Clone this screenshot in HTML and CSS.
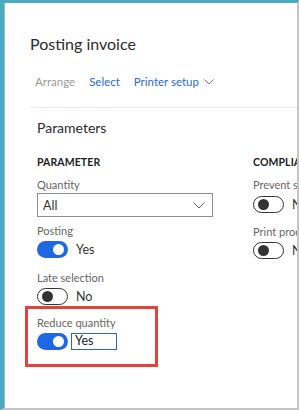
FILE: index.html
```html
<!DOCTYPE html>
<html>
<head>
<meta charset="utf-8">
<link rel="stylesheet" href="styles.css">
</head>
<body>
<div class="frame">
  <h1 class="title">Posting invoice</h1>
  <div class="actions">
    <span class="act disabled">Arrange</span>
    <span class="act link">Select</span>
    <span class="act link">Printer setup
      <svg class="chev" width="10" height="6" viewBox="0 0 10 6"><path d="M0.5 0.5 L5 5 L9.5 0.5" fill="none" stroke="#777" stroke-width="1"/></svg>
    </span>
  </div>
  <div class="panel">
    <h2 class="section">Parameters</h2>
    <div class="cols">
      <div class="col left">
        <div class="group">PARAMETER</div>
        <div class="label">Quantity</div>
        <div class="select">
          <span>All</span>
          <svg width="12" height="7" viewBox="0 0 12 7"><path d="M0.5 0.5 L6 6 L11.5 0.5" fill="none" stroke="#666" stroke-width="1"/></svg>
        </div>
        <div class="label l-posting">Posting</div>
        <div class="row"><span class="toggle on"></span><span class="val">Yes</span></div>
        <div class="label l-late">Late selection</div>
        <div class="row"><span class="toggle off"></span><span class="val">No</span></div>
        <div class="highlight">
          <div class="label">Reduce quantity</div>
          <div class="row"><span class="toggle on"></span><span class="input">Yes</span></div>
        </div>
      </div>
      <div class="col right">
        <div class="group">COMPLIANCE</div>
        <div class="label">Prevent sales</div>
        <div class="row r1"><span class="toggle off"></span><span class="val">No</span></div>
        <div class="label l-print">Print product</div>
        <div class="row"><span class="toggle off"></span><span class="val">No</span></div>
      </div>
    </div>
  </div>
</div>
</body>
</html>
```
FILE: styles.css
```css
* { box-sizing: border-box; }
html, body { margin: 0; padding: 0; background: #fff; }
body { font-family: "Segoe UI", "Lato", "Noto Sans", sans-serif; color: #333; }
.frame {
  width: 299px; height: 410px; overflow: hidden;
  border-top: 3px solid #4ba9c2;
  border-left: 4px solid #4ba9c2;
  border-right: 2px solid #c4c4c4;
  border-bottom: 2px solid #c4c4c4;
  box-shadow: inset 1px 0 0 #9fb9c0;
}
.title {
  margin: 0; padding: 31px 0 0 26px;
  font-size: 16px; font-weight: 400; color: #2b2b2b; line-height: 20px;
}
.actions {
  display: flex; gap: 14px; align-items: flex-start;
  padding: 20px 0 0 31px; font-size: 11.5px; line-height: 16px; height: 53px;
}
.act { display: inline-flex; align-items: center; white-space: nowrap; }
.disabled { color: #9a9a9a; }
.link { color: #2a6ae0; }
.chev { margin-left: 5px; }
.panel {
  margin-left: 26px;
  border-top: 1px solid #ebebeb;
  padding: 10px 0 0 7px;
}
.section { margin: 0; font-size: 14px; font-weight: 400; color: #2b2b2b; line-height: 20px; }
.cols { display: flex; gap: 40px; margin-top: 17px; }
.col.left { width: 176px; flex: none; }
.col.right { flex: none; width: 100px; }
.group { font-size: 10.5px; font-weight: 700; color: #222; line-height: 14px; letter-spacing: 0.1px; }
.label { font-size: 11px; color: #666; line-height: 16px; margin-top: 8px; white-space: nowrap; }
.select {
  height: 24px; border: 1px solid #8e8e8e; display: flex; align-items: center;
  justify-content: space-between; padding: 0 7px 0 5px; font-size: 12.5px; color: #333;
}
.row { display: flex; align-items: center; height: 17px; margin-top: 2px; }
.r1 { margin-top: 3px; }
.l-posting { margin-top: 6px; }
.l-late { margin-top: 12px; }
.l-print { margin-top: 11px; }
.toggle {
  position: relative; width: 31px; height: 17px; border-radius: 9px; flex: none;
}
.toggle.on { background: #1f68e3; }
.toggle.off { background: #fff; border: 1px solid #333; }
.toggle::after {
  content: ""; position: absolute; width: 11px; height: 11px; border-radius: 50%; top: 3px;
}
.toggle.on::after { background: #fff; right: 4px; }
.toggle.off::after { background: #333; left: 4px; top: 2px; width: 11px; height: 11px; }
.val { margin-left: 8px; font-size: 12.5px; color: #333; }
.highlight {
  margin: 1px 0 0 -12px; width: 133px; height: 61px;
  border: 3px solid #e2433d; padding: 0 0 0 9px;
}
.highlight .label { margin-top: 6px; }
.input {
  margin-left: 3px; width: 46px; height: 17px; border: 1.5px solid #2a66c9;
  font-size: 12.5px; line-height: 14px; padding-left: 3px; color: #222;
}
```
